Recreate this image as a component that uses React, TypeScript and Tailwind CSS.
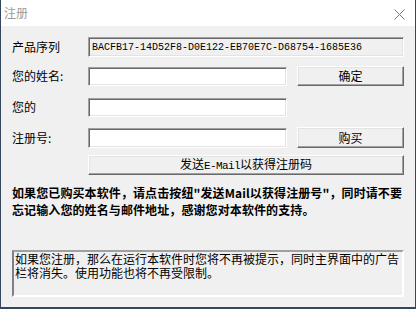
import React from 'react';

const cjk = "font-['Noto_Sans_CJK_SC','Noto_Sans',sans-serif]";
const sunken =
  'border border-t-[#a0a0a0] border-l-[#a0a0a0] border-b-white border-r-white shadow-[inset_1px_1px_0_#696969,inset_-1px_-1px_0_#e3e3e3]';
const raised =
  'border border-t-white border-l-white border-b-[#696969] border-r-[#696969] shadow-[inset_-1px_-1px_0_#a0a0a0,inset_1px_1px_0_#e3e3e3] bg-[#f0f0f0]';

const Label: React.FC<{ text: string }> = ({ text }) => (
  <div className="w-[76px] shrink-0 text-[12px] leading-[20px] text-black">{text}</div>
);

export default function App() {
  return (
    <div
      className={`w-[416px] h-[309px] bg-[#f0f0f0] border-l border-r border-b-2 border-[#34475c] flex flex-col ${cjk}`}
    >
      {/* title bar */}
      <div className="h-[26px] bg-white flex items-center justify-between pl-[3px] pr-[10px] shrink-0">
        <span className="text-[12px] text-[#9b9b9b]">注册</span>
        <svg width="11" height="11" viewBox="0 0 11 11" className="mt-[2px]">
          <path d="M0.5 0.5 L10.5 10.5 M10.5 0.5 L0.5 10.5" stroke="#7a7a7a" strokeWidth="1" />
        </svg>
      </div>

      <div className="flex flex-col pl-[11px] pr-[11px]">
        {/* serial */}
        <div className="flex items-center mt-[11px] h-[20px]">
          <Label text="产品序列" />
          <div
            className={`w-[316px] h-[20px] ${sunken} bg-[#f0f0f0] pl-[3px] flex items-center font-['Liberation_Mono',monospace] text-[10px] text-black`}
          >
            BACFB17-14D52F8-D0E122-EB70E7C-D68754-1685E36
          </div>
        </div>

        {/* name */}
        <div className="flex items-center mt-[9px] h-[20px]">
          <Label text="您的姓名:" />
          <div className={`w-[199px] h-[19px] bg-white ${sunken}`} />
          <button className={`ml-[10px] w-[107px] h-[20px] text-[12px] leading-none text-black ${raised}`}>
            确定
          </button>
        </div>

        {/* email */}
        <div className="flex items-center mt-[11px] h-[20px]">
          <Label text="您的" />
          <div className={`w-[199px] h-[19px] bg-white ${sunken}`} />
        </div>

        {/* reg code */}
        <div className="flex items-center mt-[10px] h-[21px]">
          <Label text="注册号:" />
          <div className={`w-[199px] h-[20px] bg-white ${sunken}`} />
          <button className={`ml-[10px] w-[107px] h-[21px] text-[12px] leading-none text-black ${raised}`}>
            购买
          </button>
        </div>

        {/* send */}
        <div className="flex mt-[7px]">
          <div className="w-[76px] shrink-0" />
          <button className={`w-[317px] h-[20px] text-[12px] leading-none text-black ${raised}`}>
            发送<span className="font-['Liberation_Mono',monospace] text-[11px] tracking-[-0.6px]">E-Mail</span>以获得注册码
          </button>
        </div>

        <p className="mt-[9px] text-[12px] leading-[17px] font-bold text-black tracking-[0.1px]">
          如果您已购买本软件，请点击按纽"发送Mail以获得注册号"，同时请不要
          <br />
          忘记输入您的姓名与邮件地址，感谢您对本软件的支持。
        </p>

        <div
          className={`mt-[32px] w-[392px] h-[47px] bg-[#f0f0f0] border-2 border-t-[#a0a0a0] border-l-[#808080] border-b-white border-r-white pl-[1px] text-[12px] leading-[14px] text-black`}
        >
          如果您注册，那么在运行本软件时您将不再被提示，同时主界面中的广告
          <br />
          栏将消失。使用功能也将不再受限制。
        </div>
      </div>
    </div>
  );
}
